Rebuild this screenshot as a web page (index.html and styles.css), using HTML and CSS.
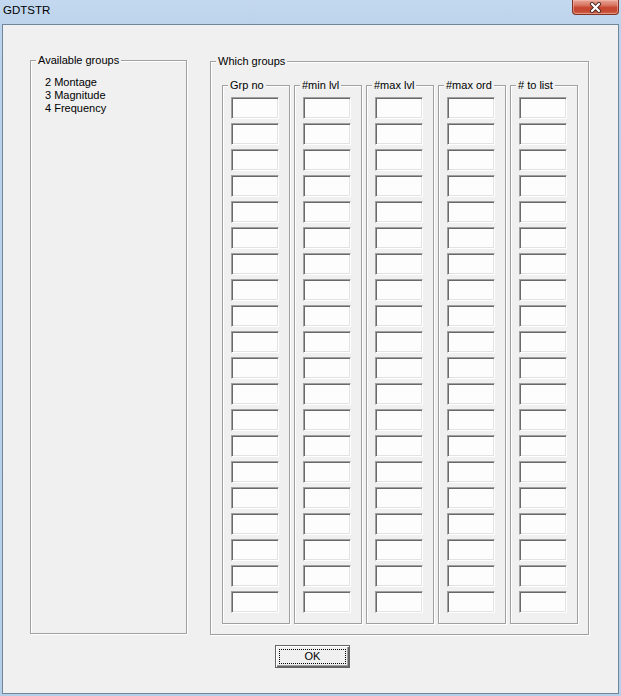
FILE: index.html
```html
<!DOCTYPE html>
<html>
<head>
<meta charset="utf-8">
<title>GDTSTR</title>
<link rel="stylesheet" href="styles.css">
</head>
<body>
<div class="window">
  <div class="titlebar">
    <span class="title">GDTSTR</span>
    <div class="close">
      <svg width="13" height="11" viewBox="0 0 13 11">
        <path d="M3 2 L10 9 M10 2 L3 9" stroke="#4a2a24" stroke-width="4" stroke-linecap="round" fill="none"/>
        <path d="M3 2 L10 9 M10 2 L3 9" stroke="#ffffff" stroke-width="2.2" stroke-linecap="round" fill="none"/>
      </svg>
    </div>
  </div>
  <div class="client">
    <div class="groups">
      <fieldset class="group avail">
        <legend>Available groups</legend>
        <div class="list">
          <div>2 Montage</div>
          <div>3 Magnitude</div>
          <div>4 Frequency</div>
        </div>
      </fieldset>
      <fieldset class="group which">
        <legend>Which groups</legend>
        <div class="cols">
          <fieldset class="group col">
            <legend>Grp no</legend>
            <div class="inputs">
              <input type="text"><input type="text"><input type="text"><input type="text"><input type="text">
              <input type="text"><input type="text"><input type="text"><input type="text"><input type="text">
              <input type="text"><input type="text"><input type="text"><input type="text"><input type="text">
              <input type="text"><input type="text"><input type="text"><input type="text"><input type="text">
            </div>
          </fieldset>
          <fieldset class="group col">
            <legend>#min lvl</legend>
            <div class="inputs">
              <input type="text"><input type="text"><input type="text"><input type="text"><input type="text">
              <input type="text"><input type="text"><input type="text"><input type="text"><input type="text">
              <input type="text"><input type="text"><input type="text"><input type="text"><input type="text">
              <input type="text"><input type="text"><input type="text"><input type="text"><input type="text">
            </div>
          </fieldset>
          <fieldset class="group col">
            <legend>#max lvl</legend>
            <div class="inputs">
              <input type="text"><input type="text"><input type="text"><input type="text"><input type="text">
              <input type="text"><input type="text"><input type="text"><input type="text"><input type="text">
              <input type="text"><input type="text"><input type="text"><input type="text"><input type="text">
              <input type="text"><input type="text"><input type="text"><input type="text"><input type="text">
            </div>
          </fieldset>
          <fieldset class="group col">
            <legend>#max ord</legend>
            <div class="inputs">
              <input type="text"><input type="text"><input type="text"><input type="text"><input type="text">
              <input type="text"><input type="text"><input type="text"><input type="text"><input type="text">
              <input type="text"><input type="text"><input type="text"><input type="text"><input type="text">
              <input type="text"><input type="text"><input type="text"><input type="text"><input type="text">
            </div>
          </fieldset>
          <fieldset class="group col">
            <legend># to list</legend>
            <div class="inputs">
              <input type="text"><input type="text"><input type="text"><input type="text"><input type="text">
              <input type="text"><input type="text"><input type="text"><input type="text"><input type="text">
              <input type="text"><input type="text"><input type="text"><input type="text"><input type="text">
              <input type="text"><input type="text"><input type="text"><input type="text"><input type="text">
            </div>
          </fieldset>
        </div>
      </fieldset>
    </div>
    <div class="actions">
      <button class="ok" type="button"><span class="focus">OK</span></button>
    </div>
  </div>
</div>
</body>
</html>
```

FILE: styles.css
```css
* {
  box-sizing: border-box;
}

html, body {
  margin: 0;
  padding: 0;
  background: #b9d1ea;
}

body {
  font-family: "Liberation Sans", Arial, sans-serif;
  font-size: 11px;
  color: #000;
}

.window {
  width: 621px;
  height: 696px;
  display: flex;
  flex-direction: column;
  background: linear-gradient(to bottom, #c4d9ef 0px, #bad2eb 30px, #b6cfe8 100%);
}

.titlebar {
  height: 24px;
  display: flex;
  align-items: flex-start;
  flex-shrink: 0;
}

.title {
  padding: 4px 0 0 3px;
  line-height: 13px;
  font-size: 11.5px;
  color: #000;
}

.close {
  margin-left: auto;
  margin-right: 2px;
  width: 47px;
  height: 15px;
  border: 1px solid #7e3326;
  border-top: none;
  border-radius: 0 0 4px 4px;
  background: linear-gradient(to bottom, #e7a597 0%, #d97a66 35%, #c7462f 55%, #c54a33 80%, #d36a52 100%);
  display: flex;
  align-items: center;
  justify-content: center;
  box-shadow: inset 0 0 0 1px rgba(255, 200, 190, 0.45);
}

.close svg {
  display: block;
}

.client {
  height: 670px;
  margin: 0 2px 2px 2px;
  border: 1px solid #6f869d;
  background: #f0f0f0;
  padding: 29px 0 0 27px;
}

.groups {
  display: flex;
  align-items: stretch;
  gap: 23px;
}

fieldset.group {
  margin: 0;
  padding: 0;
  min-width: 0;
  border: 1px solid #a0a0a0;
  box-shadow: inset 1px 1px 0 #ffffff, 1px 1px 0 #ffffff;
}

fieldset.group > legend {
  margin-left: 5px;
  padding: 0 2px;
  line-height: 13px;
  background: #f0f0f0;
}

fieldset.avail {
  width: 157px;
  margin-bottom: 1px;
}

.list {
  padding: 9px 0 0 14px;
  line-height: 13px;
}

fieldset.which {
  width: 379px;
  margin-top: 1px;
}

.cols {
  display: flex;
  gap: 4px;
  padding: 11px 10px 10px 11px;
}

fieldset.col {
  width: 68px;
}

.inputs {
  display: flex;
  flex-direction: column;
  gap: 4px;
  padding: 5px 0 10px 8px;
}

.inputs input {
  display: block;
  width: 48px;
  height: 22px;
  margin: 0;
  padding: 0;
  border: 1px solid;
  border-color: #a0a0a0 #ffffff #ffffff #a0a0a0;
  box-shadow: inset 1px 1px 0 #696969, inset -1px -1px 0 #e3e3e3;
  background: #fdfdfd;
  outline: none;
  font: inherit;
}

.actions {
  margin-top: 10px;
  padding-left: 245px;
}

.ok {
  width: 75px;
  height: 23px;
  margin: 0;
  padding: 0;
  display: flex;
  border: 1px solid #646464;
  box-shadow: inset 1px 1px 0 #ffffff, inset -1px -1px 0 #646464, inset -2px -2px 0 #a0a0a0;
  background: #f0f0f0;
  font: inherit;
  color: #000;
}

.focus {
  flex: 1;
  margin: 3px;
  border: 1px dotted #000;
  line-height: 13px;
  text-align: center;
}
```
